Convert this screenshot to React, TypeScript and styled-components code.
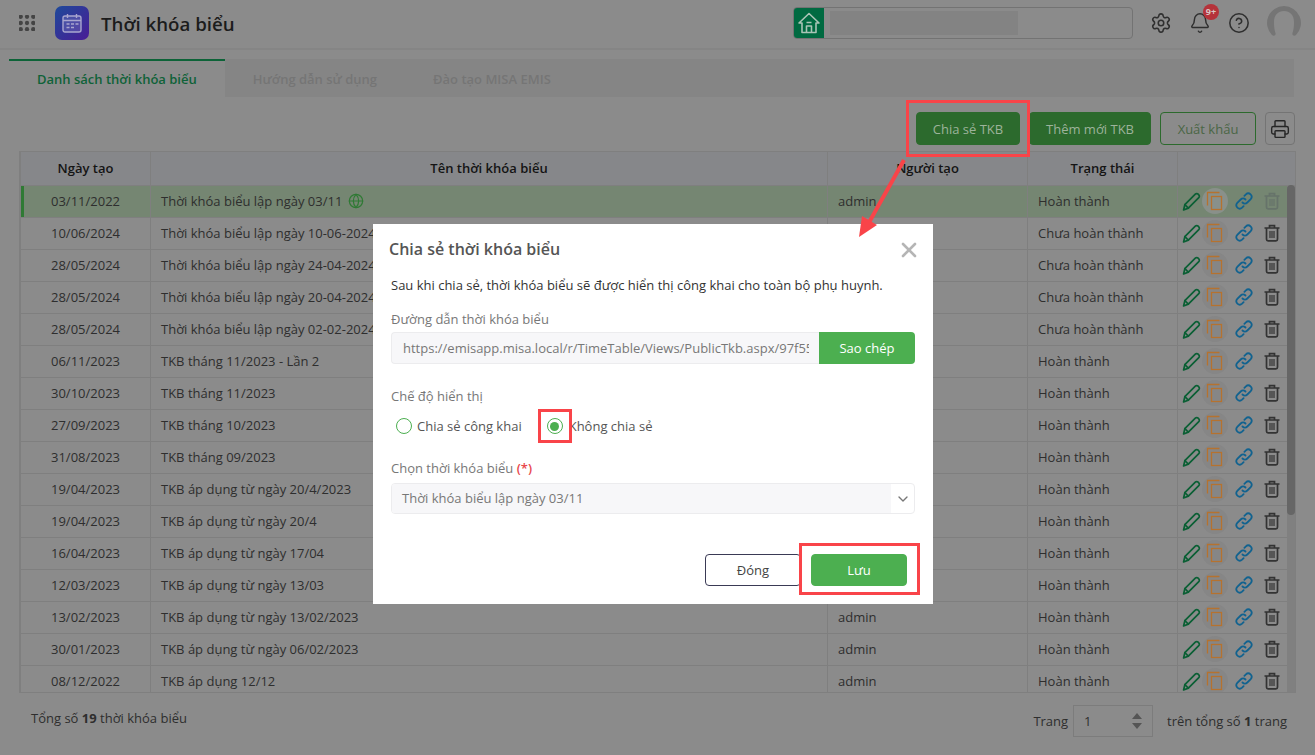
import React from "react";
import styled, { createGlobalStyle } from "styled-components";
import { Settings, Bell, CircleHelp, Globe, ChevronDown, Printer, X } from "lucide-react";

const Global = createGlobalStyle`
  html, body { margin: 0; padding: 0; height: 100%; overflow: hidden; }
  body { background: #8b8b8b; font-family: "Open Sans", "Noto Sans", sans-serif; font-size: 13px; color: #2e2e2e; }
  * { box-sizing: border-box; }
`;

const Page = styled.div`
  position: relative;
  width: 1315px;
  height: 755px;
  display: flex;
  flex-direction: column;
  overflow: hidden;
`;

const TopBar = styled.header`
  height: 50px;
  flex: none;
  display: flex;
  align-items: center;
  padding: 0 14px 2px 19px;
  border-bottom: 2px solid #858585;
`;
const AppGrid = styled.svg`
  width: 16px;
  height: 16px;
  margin-right: 20px;
  flex: none;
`;
const AppLogo = styled.div`
  width: 34px;
  height: 34px;
  border-radius: 7px;
  background: linear-gradient(135deg, #1e4a9a, #4a1c96);
  display: flex;
  align-items: center;
  justify-content: center;
  flex: none;
`;
const AppTitle = styled.h1`
  margin: 0 0 0 12px;
  font-size: 18.7px;
  font-weight: 600;
  color: #1c1c1c;
  flex: 1;
`;
const SchoolBox = styled.div`
  width: 340px;
  height: 32px;
  margin-right: 17px;
  border: 1px solid #737373;
  border-radius: 4px;
  display: flex;
  align-items: center;
  overflow: hidden;
`;
const SchoolHome = styled.div`
  width: 30px;
  height: 100%;
  background: #006a41;
  display: flex;
  align-items: center;
  justify-content: center;
  flex: none;
`;
const SchoolBlur = styled.div`
  width: 188px;
  height: 24px;
  margin-left: 6px;
  background: #838383;
`;
const HeaderIcons = styled.div`
  display: flex;
  align-items: center;
  gap: 17px;
  color: #2f2f2f;
`;
const BellWrap = styled.div`
  position: relative;
  display: flex;
  width: 22px;
  height: 24px;
  align-items: center;
`;
const BellBadge = styled.span`
  position: absolute;
  top: -7px;
  left: 14px;
  width: 16px;
  height: 16px;
  border-radius: 50%;
  background: #b5333a;
  color: #d9c6c6;
  font-size: 9px;
  font-weight: 700;
  line-height: 16px;
  text-align: center;
`;
const Avatar = styled.svg`
  width: 34px;
  height: 34px;
`;

const Tabs = styled.nav`
  margin: 9px 21px 0 9px;
  height: 38px;
  flex: none;
  display: flex;
  background: #858585;
`;
const Tab = styled.div<{ $active?: boolean }>`
  height: 38px;
  padding: 0 28px;
  display: flex;
  align-items: center;
  font-size: 13px;
  font-weight: 600;
  color: ${(p) => (p.$active ? "#0f6238" : "#757575")};
  background: ${(p) => (p.$active ? "#8b8b8b" : "transparent")};
  border-top: 2px solid ${(p) => (p.$active ? "#0d6338" : "transparent")};
`;

const Toolbar = styled.div`
  margin-top: 15px;
  padding-right: 20px;
  height: 33px;
  flex: none;
  display: flex;
  justify-content: flex-end;
  gap: 9px;
`;
const ToolButton = styled.button<{ $outline?: boolean; $w: number }>`
  width: ${(p) => p.$w}px;
  height: 33px;
  border-radius: 4px;
  font-family: inherit;
  font-size: 13px;
  padding: 0;
  border: 1px solid #2c6a2d;
  background: ${(p) => (p.$outline ? "transparent" : "#2c6a2d")};
  color: ${(p) => (p.$outline ? "#4a6645" : "#9db39b")};
`;
const PrintButton = styled.button`
  width: 30px;
  height: 33px;
  border-radius: 4px;
  border: 1px solid #747474;
  background: transparent;
  color: #262626;
  padding: 0;
  display: flex;
  align-items: center;
  justify-content: center;
`;

const TableWrap = styled.div`
  position: relative;
  margin: 6px 19px 0 19px;
  width: 1277px;
  height: 542px;
  flex: none;
  overflow: hidden;
  border: 1px solid #7f7f7f;
`;
const Table = styled.table`
  border-collapse: collapse;
  table-layout: fixed;
  width: 1276px;
`;
const HeadCell = styled.th<{ $w: number }>`
  width: ${(p) => p.$w}px;
  height: 33px;
  padding: 0;
  background: #86878a;
  border: 1px solid #7f7f7f;
  border-top: 0;
  font-size: 13px;
  font-weight: 600;
  color: #141414;
  text-align: center;
`;
const Row = styled.tr<{ $selected?: boolean }>`
  background: ${(p) => (p.$selected ? "#758672" : "transparent")};
`;
const Cell = styled.td<{ $center?: boolean; $bar?: boolean }>`
  height: 32px;
  padding: ${(p) => (p.$center ? "0" : "0 10px")};
  border: 1px solid #7f7f7f;
  font-size: 13px;
  color: #2e2e2e;
  white-space: nowrap;
  text-align: ${(p) => (p.$center ? "center" : "left")};
  box-shadow: ${(p) => (p.$bar ? "inset 3px 0 0 #2f7a34" : "none")};
`;
const NameText = styled.span`
  display: inline-flex;
  align-items: center;
  gap: 6px;
  color: #2e2e2e;
`;
const Actions = styled.div`
  display: flex;
  align-items: center;
`;
const ActionSlot = styled.span<{ $circle?: boolean; $shift?: number; $tint?: boolean }>`
  width: 26px;
  height: 26px;
  flex: none;
  margin-left: ${(p) => p.$shift ?? 0}px;
  display: flex;
  align-items: center;
  justify-content: center;
  border-radius: 50%;
  background: ${(p) => (p.$circle ? (p.$tint ? "#89908a" : "#868686") : "transparent")};
`;
const ScrollBar = styled.div`
  position: absolute;
  top: 33px;
  right: 0;
  width: 8px;
  bottom: 0;
  background: #808080;
`;
const ScrollThumb = styled.div`
  width: 8px;
  height: 330px;
  border-radius: 4px;
  background: #666;
`;

const Footer = styled.footer`
  flex: 1;
  display: flex;
  align-items: flex-start;
  justify-content: space-between;
  padding: 12px 28px 0 31px;
  font-size: 13px;
  color: #2e2e2e;
`;
const TotalText = styled.span`
  line-height: 26px;
`;
const Pager = styled.div`
  display: flex;
  align-items: center;
  gap: 14px;
  height: 32px;
`;
const PageInput = styled.div`
  width: 80px;
  height: 32px;
  margin-left: -9px;
  border: 1px solid #7c7c7c;
  display: flex;
  align-items: center;
  justify-content: space-between;
  padding: 0 10px;
`;
const Spin = styled.svg`
  width: 10px;
  height: 18px;
`;

const Modal = styled.section`
  position: absolute;
  left: 373px;
  top: 224px;
  width: 560px;
  height: 380px;
  background: #fff;
  display: flex;
  flex-direction: column;
  padding: 0 18px;
  color: #333;
`;
const ModalHead = styled.div`
  height: 50px;
  margin-left: -2px;
  display: flex;
  align-items: center;
  justify-content: space-between;
  flex: none;
`;
const ModalTitle = styled.h2`
  margin: 0;
  font-size: 16px;
  font-weight: 600;
  color: #555;
`;
const CloseBtn = styled.span`
  display: flex;
  color: #b5b5b5;
  margin: 2px -6px 0 0;
`;
const Intro = styled.p`
  margin: 1px 0 0;
  font-size: 13px;
  line-height: 20px;
  color: #333;
`;
const Label = styled.div<{ $top: number }>`
  margin-top: ${(p) => p.$top}px;
  font-size: 13px;
  line-height: 20px;
  color: #777;
`;
const Required = styled.span`
  color: #e8474c;
  font-weight: 600;
`;
const LinkRow = styled.div`
  margin-top: 3px;
  height: 32px;
  display: flex;
`;
const LinkField = styled.div`
  width: 428px;
  height: 32px;
  background: #f7f7f9;
  border: 1px solid #ececee;
  border-right: 0;
  border-radius: 4px 0 0 4px;
  padding: 0 10px 0 11px;
`;
const LinkValue = styled.div`
  font-size: 13px;
  line-height: 30px;
  color: #777;
  white-space: nowrap;
  overflow: hidden;
`;
const CopyBtn = styled.button`
  width: 96px;
  height: 32px;
  border: 0;
  padding: 0;
  border-radius: 0 4px 4px 0;
  background: #4caf50;
  color: #fff;
  font-family: inherit;
  font-size: 13px;
`;
const RadioRow = styled.div`
  margin-top: 8px;
  height: 24px;
  display: flex;
  align-items: center;
  padding-left: 5px;
`;
const RadioCircle = styled.span<{ $checked?: boolean }>`
  width: 16px;
  height: 16px;
  border-radius: 50%;
  border: 1.5px solid #4caf50;
  flex: none;
  display: flex;
  align-items: center;
  justify-content: center;
  &::after {
    content: "";
    width: 9px;
    height: 9px;
    border-radius: 50%;
    background: ${(p) => (p.$checked ? "#4caf50" : "transparent")};
  }
`;
const RadioText = styled.span<{ $gap: number; $after?: number }>`
  margin-left: ${(p) => p.$gap}px;
  margin-right: ${(p) => p.$after ?? 0}px;
  font-size: 13px;
  color: #555;
`;
const SelectBox = styled.div`
  margin-top: 5px;
  height: 31px;
  width: 524px;
  border: 1px solid #ececee;
  border-radius: 4px;
  display: flex;
  color: #777;
  font-size: 13px;
  overflow: hidden;
`;
const SelectValue = styled.div`
  flex: 1;
  background: #f7f7f9;
  padding-left: 10px;
  line-height: 29px;
`;
const SelectArrow = styled.div`
  width: 23px;
  display: flex;
  align-items: center;
  justify-content: center;
  color: #777;
`;
const ModalFoot = styled.div`
  margin-top: 40px;
  display: flex;
  justify-content: flex-end;
  gap: 10px;
  padding-right: 8px;
`;
const FootButton = styled.button<{ $primary?: boolean }>`
  width: 96px;
  height: 32px;
  border-radius: 4px;
  padding: 0;
  font-family: inherit;
  font-size: 13px;
  border: 1px solid ${(p) => (p.$primary ? "#4caf50" : "#3a3a55")};
  background: ${(p) => (p.$primary ? "#4caf50" : "#fff")};
  color: ${(p) => (p.$primary ? "#fff" : "#444")};
`;

const RedBox = styled.div<{ $l: number; $t: number; $w: number; $h: number }>`
  position: absolute;
  left: ${(p) => p.$l}px;
  top: ${(p) => p.$t}px;
  width: ${(p) => p.$w}px;
  height: ${(p) => p.$h}px;
  border: 3px solid #f94449;
  pointer-events: none;
`;
const ArrowSvg = styled.svg`
  position: absolute;
  left: 850px;
  top: 150px;
  width: 70px;
  height: 95px;
  pointer-events: none;
`;

const Pencil = ({ c = "#0a5f34" }: { c?: string }) => (
  <svg width="19" height="19" viewBox="0 0 18 18" fill="none" stroke={c} strokeWidth="1.6" strokeLinejoin="round" strokeLinecap="round">
    <path d="M1.5 17l1.2-5L12.6 2.1a1.9 1.9 0 0 1 2.7 0l.6.6a1.9 1.9 0 0 1 0 2.7L6 15.3z" />
    <path d="M2.7 12l3.3 3.3" />
  </svg>
);
const CopyIcon = () => (
  <svg width="18" height="20" viewBox="0 0 18 20" fill="none" stroke="#b5722f" strokeWidth="1.3">
    <path d="M13.500 1.500H1.500V14.500" />
    <rect x="5.500" y="5.500" width="10" height="13" />
  </svg>
);
const LinkIcon = () => (
  <svg width="20" height="20" viewBox="0 0 20 20" fill="none" stroke="#11628f" strokeWidth="1.8" strokeLinecap="round">
    <path d="M8.5 11.500a3.400 3.400 0 0 0 4.800 0l3.400-3.400a3.400 3.400 0 0 0-4.800-4.800l-1.500 1.500" />
    <path d="M11.500 8.500a3.400 3.400 0 0 0-4.800 0l-3.400 3.400a3.400 3.400 0 0 0 4.800 4.800l1.500-1.500" />
  </svg>
);
const TrashIcon = ({ c }: { c: string }) => (
  <svg width="18" height="18" viewBox="0 0 18 18" fill="none" stroke={c} strokeWidth="1.7">
    <path d="M1.500 4h15M6.500 4V1.600h5V4" />
    <path d="M3.500 4v11.200c0 1 .7 1.600 1.600 1.600h7.800c1 0 1.600-.7 1.600-1.600V4" />
    <path d="M7 7v7M9 7v7M11 7v7" strokeWidth="1.2" />
  </svg>
);
const HomeIcon = () => (
  <svg width="24" height="24" viewBox="0 0 24 24" fill="none" stroke="#a9c4b6" strokeWidth="1.6" strokeLinejoin="round">
    <path d="M2 12L12 2.500 22 12h-3v9.500H5V12z" />
    <path d="M9.500 21.500V15h5v6.500M9.500 11.500h5" />
  </svg>
);

type Rec = [string, string, string];
const DONE = "Hoàn thành";
const TODO = "Chưa hoàn thành";
const rows: Rec[] = [
  ["03/11/2022", "Thời khóa biểu lập ngày 03/11", DONE],
  ["10/06/2024", "Thời khóa biểu lập ngày 10-06-2024", TODO],
  ["28/05/2024", "Thời khóa biểu lập ngày 24-04-2024", TODO],
  ["28/05/2024", "Thời khóa biểu lập ngày 20-04-2024", TODO],
  ["28/05/2024", "Thời khóa biểu lập ngày 02-02-2024", TODO],
  ["06/11/2023", "TKB tháng 11/2023 - Lần 2", DONE],
  ["30/10/2023", "TKB tháng 11/2023", DONE],
  ["27/09/2023", "TKB tháng 10/2023", DONE],
  ["31/08/2023", "TKB tháng 09/2023", DONE],
  ["19/04/2023", "TKB áp dụng từ ngày 20/4/2023", DONE],
  ["19/04/2023", "TKB áp dụng từ ngày 20/4", DONE],
  ["16/04/2023", "TKB áp dụng từ ngày 17/04", DONE],
  ["12/03/2023", "TKB áp dụng từ ngày 13/03", DONE],
  ["13/02/2023", "TKB áp dụng từ ngày 13/02/2023", DONE],
  ["30/01/2023", "TKB áp dụng từ ngày 06/02/2023", DONE],
  ["08/12/2022", "TKB áp dụng 12/12", DONE],
];

export default function App() {
  return (
    <Page>
      <Global />
      <TopBar>
        <AppGrid viewBox="0 0 18 18" fill="#444">
          {[2, 9, 16].flatMap((y) => [2, 9, 16].map((x) => <circle key={`${x}-${y}`} cx={x} cy={y} r="2.4" />))}
        </AppGrid>
        <AppLogo>
          <svg width="20" height="20" viewBox="0 0 20 20" fill="none" stroke="#a9a6cf" strokeWidth="1.4">
            <rect x="1" y="3" width="18" height="16" rx="2" fill="#7d7fc0" fillOpacity=".35" />
            <path d="M1 7.500h18M5.500 1v4M14.500 1v4" />
            <path d="M4.500 11h3M9 11h3M13.500 11h3M4.500 14.500h3M9 14.500h3" />
          </svg>
        </AppLogo>
        <AppTitle>Thời khóa biểu</AppTitle>
        <SchoolBox>
          <SchoolHome>
            <HomeIcon />
          </SchoolHome>
          <SchoolBlur />
        </SchoolBox>
        <HeaderIcons>
          <Settings size={22} strokeWidth={1.7} />
          <BellWrap>
            <Bell size={22} strokeWidth={1.6} />
            <BellBadge>9+</BellBadge>
          </BellWrap>
          <CircleHelp size={22} strokeWidth={1.7} />
          <Avatar viewBox="0 0 34 34">
            <path fillRule="evenodd" fill="#757575" d="M17 0a17 17 0 0 1 12 29c-1.600 1.600-4 .5-3.600-1.600.4-2 1.600-3.400 1.600-11.400 0-7-4-11-10-11S7 9 7 16c0 8 1.200 9.400 1.600 11.400C9 29.500 6.600 30.600 5 29A17 17 0 0 1 17 0z" />
          </Avatar>
        </HeaderIcons>
      </TopBar>

      <Tabs>
        <Tab $active>Danh sách thời khóa biểu</Tab>
        <Tab>Hướng dẫn sử dụng</Tab>
        <Tab>Đào tạo MISA EMIS</Tab>
      </Tabs>

      <Toolbar>
        <ToolButton $w={104}>Chia sẻ TKB</ToolButton>
        <ToolButton $w={122}>Thêm mới TKB</ToolButton>
        <ToolButton $w={96} $outline>Xuất khẩu</ToolButton>
        <PrintButton>
          <Printer size={20} strokeWidth={1.7} />
        </PrintButton>
      </Toolbar>

      <TableWrap>
        <Table>
          <thead>
            <tr>
              <HeadCell $w={130}>Ngày tạo</HeadCell>
              <HeadCell $w={677}>Tên thời khóa biểu</HeadCell>
              <HeadCell $w={200}>Người tạo</HeadCell>
              <HeadCell $w={150}>Trạng thái</HeadCell>
              <HeadCell $w={119} />
            </tr>
          </thead>
          <tbody>
            {rows.map(([d, n, s], i) => (
              <Row key={i} $selected={i === 0}>
                <Cell $center $bar={i === 0}>{d}</Cell>
                <Cell>
                  <NameText>
                    {n}
                    {i === 0 && <Globe size={16} color="#2f7a34" strokeWidth={1.8} />}
                  </NameText>
                </Cell>
                <Cell>admin</Cell>
                <Cell>{s}</Cell>
                <Cell $center>
                  <Actions>
                    <ActionSlot><Pencil /></ActionSlot>
                    <ActionSlot $circle $tint={i === 0} $shift={-2}><CopyIcon /></ActionSlot>
                    <ActionSlot $shift={3}><LinkIcon /></ActionSlot>
                    <ActionSlot $shift={2}><TrashIcon c={i === 0 ? "#66736a" : "#333"} /></ActionSlot>
                  </Actions>
                </Cell>
              </Row>
            ))}
          </tbody>
        </Table>
        <ScrollBar><ScrollThumb /></ScrollBar>
      </TableWrap>

      <Footer>
        <TotalText>Tổng số <b>19</b> thời khóa biểu</TotalText>
        <Pager>
          <span>Trang</span>
          <PageInput>
            <span>1</span>
            <Spin viewBox="0 0 10 18" fill="#555">
              <path d="M5 1l5 6H0zM5 17L0 11h10z" />
            </Spin>
          </PageInput>
          <span>trên tổng số <b>1</b> trang</span>
        </Pager>
      </Footer>

      <Modal>
        <ModalHead>
          <ModalTitle>Chia sẻ thời khóa biểu</ModalTitle>
          <CloseBtn><X size={24} strokeWidth={2.6} /></CloseBtn>
        </ModalHead>
        <Intro>Sau khi chia sẻ, thời khóa biểu sẽ được hiển thị công khai cho toàn bộ phụ huynh.</Intro>
        <Label $top={14}>Đường dẫn thời khóa biểu</Label>
        <LinkRow>
          <LinkField>
            <LinkValue>https://emisapp.misa.local/r/TimeTable/Views/PublicTkb.aspx/97f55c</LinkValue>
          </LinkField>
          <CopyBtn>Sao chép</CopyBtn>
        </LinkRow>
        <Label $top={22}>Chế độ hiển thị</Label>
        <RadioRow>
          <RadioCircle />
          <RadioText $gap={5} $after={25}>Chia sẻ công khai</RadioText>
          <RadioCircle $checked />
          <RadioText $gap={6}>Không chia sẻ</RadioText>
        </RadioRow>
        <Label $top={20}>Chọn thời khóa biểu <Required>(*)</Required></Label>
        <SelectBox>
          <SelectValue>Thời khóa biểu lập ngày 03/11</SelectValue>
          <SelectArrow><ChevronDown size={16} /></SelectArrow>
        </SelectBox>
        <ModalFoot>
          <FootButton>Đóng</FootButton>
          <FootButton $primary>Lưu</FootButton>
        </ModalFoot>
      </Modal>

      <ArrowSvg viewBox="0 0 70 95">
        <path d="M54 10L17 76" stroke="#f94449" strokeWidth="4" fill="none" />
        <path d="M9 87L12 66 27 75z" fill="#f94449" />
      </ArrowSvg>
      <RedBox $l={906} $t={100} $w={124} $h={57} />
      <RedBox $l={538} $t={409} $w={34} $h={34} />
      <RedBox $l={799} $t={543} $w={121} $h={52} />
    </Page>
  );
}
